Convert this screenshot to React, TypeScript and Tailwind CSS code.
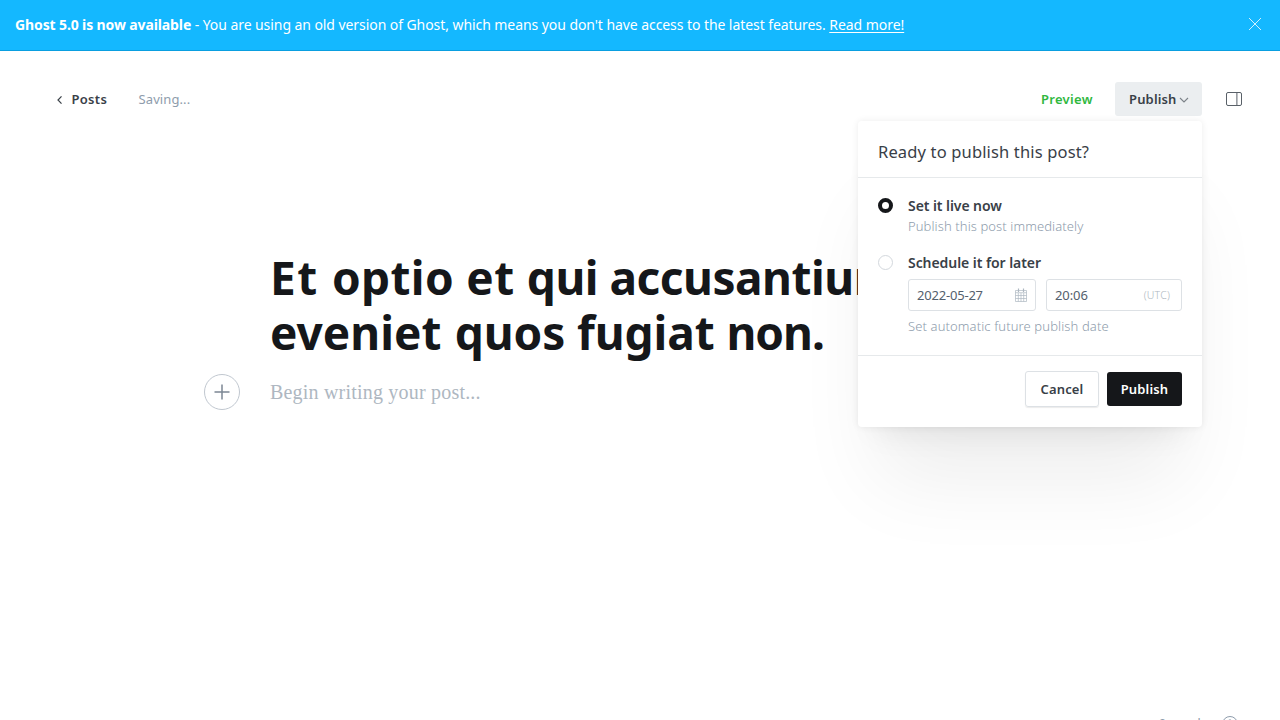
import React from 'react';

function CalendarIcon() {
  return (
    <svg className="-mt-[3px] shrink-0" width="12" height="14" viewBox="0 0 12 14" fill="none" stroke="#aeb7c1" strokeWidth="0.7">
      <path d="M.5 2.500h11v11H.5zM.5 4.700h11M.5 7.500h11M.5 10.500h11M3.300 5v8.500M6 5v8.500M8.700 5v8.500" />
      <path d="M3.500 .5v3.500M8.500 .5v3.500" strokeWidth="1.200" />
    </svg>
  );
}

function Banner() {
  return (
    <div className="flex h-[51px] items-center justify-between border-b border-[#0a9fe0] bg-[#14b8ff] pl-[15px] pr-[19px] text-white">
      <p className="whitespace-nowrap text-[14px] leading-5">
        <span className="font-bold tracking-[-0.12px]">Ghost 5.0 is now available</span>
        <span className="tracking-[-0.07px]"> - You are using an old version of Ghost, which means you don't have access to the latest features. </span>
        <a className="tracking-[-0.05px] underline underline-offset-2">Read more!</a>
      </p>
      <svg className="-mt-[2px]" width="12" height="12" viewBox="0 0 12 12" stroke="#fff" strokeWidth="0.8">
        <path d="M0 0l12 12M12 0L0 12" />
      </svg>
    </div>
  );
}

function EditorHeader() {
  return (
    <header className="flex h-[34px] items-center justify-between pl-[56px] pr-[38px] text-[13px] leading-5">
      <div className="flex items-center">
        <svg className="mt-[1px]" width="7" height="8" viewBox="0 0 7 8" fill="none" stroke="#394047" strokeWidth="1.2">
          <path d="M5.500 .4L2 4l3.500 3.600" />
        </svg>
        <span className="ml-[8.500px] w-[67px] font-semibold tracking-[0.3px] text-[#394047]">Posts</span>
        <span className="tracking-[0.1px] text-[#8e9cac]">Saving...</span>
      </div>
      <div className="flex items-center">
        <span className="w-[74px] font-semibold tracking-[0.3px] text-[#30b83f]">Preview</span>
        <div className="flex h-[34px] w-[87px] items-center rounded-[3px] bg-[#ebeef0] pl-[14px] font-semibold text-[#394047]">
          <span className="w-[50px] tracking-[0.15px]">Publish</span>
          <svg className="mt-[2px]" width="10" height="6" viewBox="0 0 10 6" fill="none" stroke="#7c8288" strokeWidth="1.100">
            <path d="M1 1l4 4 4-4" />
          </svg>
        </div>
        <svg className="ml-[24px]" width="16" height="14" viewBox="0 0 16 14" fill="none" stroke="#596068" strokeWidth="1">
          <rect x=".5" y=".5" width="15" height="13" rx="1.500" />
          <path d="M10.900 .5v13" />
        </svg>
      </div>
    </header>
  );
}

function PublishMenu() {
  return (
    <div className="absolute left-[858px] top-[121px] h-[306px] w-[344px] rounded-[4px] bg-white text-[#394047] shadow-[0_0_7px_rgba(0,0,0,0.08),0_22px_30px_-18px_rgba(0,0,0,0.08),0_72px_80px_-20px_rgba(0,0,0,0.07)]">
      <h2 className="h-[57px] border-b border-[#e6e9eb] pl-[20px] pt-[19px] text-[16.500px] leading-6 tracking-[0.15px]">Ready to publish this post?</h2>
      <div className="h-[178px] border-b border-[#e6e9eb] px-[20px] pt-[18px]">
        <div className="flex h-[57px] gap-[15px]">
          <span className="mt-[2px] size-[15px] shrink-0 rounded-full border-4 border-[#15171a]" />
          <div className="whitespace-nowrap">
            <p className="text-[14px] font-semibold leading-5 tracking-[-0.07px]">Set it live now</p>
            <p className="text-[13px] font-light leading-5 tracking-[0.1px] text-[#8e9cac]">Publish this post immediately</p>
          </div>
        </div>
        <div className="flex gap-[15px]">
          <span className="mt-[2px] size-[15px] shrink-0 rounded-full border border-[#d3d8dd]" />
          <div className="flex-1 whitespace-nowrap">
            <p className="text-[14px] font-semibold leading-5 tracking-[-0.06px]">Schedule it for later</p>
            <div className="mt-[6px] flex gap-[10px] text-[13px] text-[#54606d]">
              <div className="flex h-[32px] w-[128px] items-center justify-between rounded-[3px] border border-[#dde1e5] pl-[8px] pr-[8px] pt-[2px] tracking-[-0.2px]">
                2022-05-27
                <CalendarIcon />
              </div>
              <div className="flex h-[32px] w-[136px] items-center justify-between rounded-[3px] border border-[#dde1e5] pl-[8px] pr-[11px] pt-[2px] tracking-[-0.1px]">
                20:06
                <span className="text-[10.500px] font-light tracking-[0.2px] text-[#aeb7c1]">(UTC)</span>
              </div>
            </div>
            <p className="mt-[5px] text-[13px] font-light leading-5 tracking-[0.12px] text-[#8e9cac]">Set automatic future publish date</p>
          </div>
        </div>
      </div>
      <div className="flex items-center justify-end gap-[8px] pr-[20px] pt-[15px] text-[13px] font-semibold tracking-[0.15px]">
        <button className="h-[36px] w-[74px] rounded-[3px] border border-[#dde1e5] pt-[2px] shadow-[0_1px_1px_rgba(0,0,0,0.08)]">Cancel</button>
        <button className="h-[34px] w-[75px] rounded-[3px] bg-[#15171a] pt-[2px] text-white">Publish</button>
      </div>
    </div>
  );
}

export default function App() {
  return (
    <div className="relative flex h-[720px] w-[1280px] flex-col overflow-hidden bg-white font-['Noto_Sans',sans-serif]">
      <Banner />
      <div className="h-[31px]" />
      <EditorHeader />
      <main className="mt-[134px] pl-[204px]">
        <h1 className="ml-[66px] whitespace-nowrap text-[46px] font-bold leading-[55px] text-[#15171a]">
          <span className="block">
            <span className="tracking-[1.4px]">Et </span>
            <span className="tracking-[0.37px]">optio et </span>
            <span className="tracking-[-0.5px]">qui accusantium</span>
          </span>
          <span className="block">
            eveniet <span className="ml-[1.500px] tracking-[-0.1px]">quos fugiat </span>
            <span className="tracking-[-1px]">non.</span>
          </span>
        </h1>
        <div className="mt-[14px] flex items-center gap-[30px]">
          <svg width="36" height="36" viewBox="0 0 36 36" fill="none">
            <circle cx="18" cy="18" r="17.500" stroke="#b9c1ca" strokeWidth="0.900" />
            <path d="M10.500 18h15M18 10.500v15" stroke="#7c8794" strokeWidth="1.500" />
          </svg>
          <p className="font-['Liberation_Serif',serif] text-[20px] leading-8 tracking-[0.2px] text-[#aeb7c1]">Begin writing your post...</p>
        </div>
      </main>
      <footer className="mt-auto -mb-[12px] flex h-[16px] items-start justify-end gap-[15px] pr-[42px] text-[#8e9cac]">
        <span className="-mt-[3px] text-[13px] leading-5">0 words</span>
        <svg width="16" height="16" viewBox="0 0 16 16" fill="none" stroke="#8e9cac" strokeWidth="1">
          <circle cx="8" cy="8" r="7.500" />
          <path d="M5.700 6a2.300 2.300 0 114 1.700C8.500 8.500 8 9 8 10M8 11.500v1" />
        </svg>
      </footer>
      <PublishMenu />
    </div>
  );
}
